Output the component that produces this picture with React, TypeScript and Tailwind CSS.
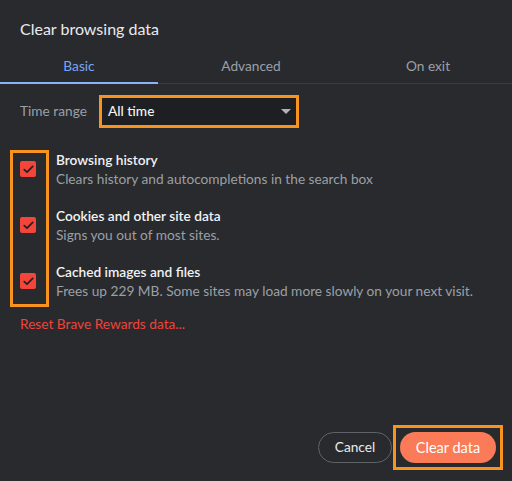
import { useState } from "react"

const items = [
  { title: "Browsing history", desc: "Clears history and autocompletions in the search box" },
  { title: "Cookies and other site data", desc: "Signs you out of most sites." },
  { title: "Cached images and files", desc: "Frees up 229 MB. Some sites may load more slowly on your next visit." },
]

function Check() {
  return (
    <div className="flex h-4 w-4 shrink-0 items-center justify-center rounded-[2px] bg-[#f4453a]">
      <svg width="11" height="9" viewBox="0 0 11 9" fill="none">
        <path d="M1.3 4.6 L4 7.2 L9.7 1.4" stroke="#202124" strokeWidth="1.8" strokeLinecap="round" strokeLinejoin="round" />
      </svg>
    </div>
  )
}

export default function App() {
  const [tab, setTab] = useState(0)
  const tabs = [
    { label: "Basic", w: "w-[158px]" },
    { label: "Advanced", w: "w-[186px]" },
    { label: "On exit", w: "flex-1" },
  ]

  return (
    <div className="flex h-[481px] w-[512px] flex-col bg-[#292a2e] font-['Lato','Liberation_Sans',sans-serif] text-[13.7px]">
      <h1 className="px-5 pt-[17px] text-[16px] leading-6 text-[#e8eaed]">Clear browsing data</h1>

      {/* Tabs */}
      <div className="flex border-b border-[#3c3d41]">
        {tabs.map((t, i) => (
          <button
            key={t.label}
            onClick={() => setTab(i)}
            className={`${t.w} relative h-[42px] pt-[7px] text-center leading-[24px] ${i === tab ? "text-[#7aa5f5]" : "text-[#9aa0a6]"}`}
          >
            <span className="block">{t.label}</span>
            {i === tab && <span className="absolute inset-x-0 -bottom-px h-[2px] bg-[#8ab4f8]" />}
          </button>
        ))}
      </div>

      {/* Time range */}
      <div className="mt-[11px] flex items-center pl-5">
        <span className="w-[79px] text-[#9aa0a6]">Time range</span>
        <div className="flex h-[33px] w-[200px] items-center justify-between border-[3px] border-[#f7931e] bg-[#1e1f22] pl-[6px] pr-[5px] text-[#f1f3f4]">
          <span className="font-medium">All time</span>
          <svg width="10" height="5" viewBox="0 0 10 5">
            <path d="M0 0 L10 0 L5 5 Z" fill="#b0b3b8" />
          </svg>
        </div>
      </div>

      {/* Checkboxes */}
      <div className="relative mt-[22px] flex flex-col gap-[18px] pl-5">
        <div className="absolute left-[10px] top-0 h-[157px] w-[39px] border-[3px] border-[#f7931e]" />
        {items.map((it) => (
          <div key={it.title} className="flex items-center gap-5">
            <Check />
            <div className="flex flex-col">
              <span className="font-semibold leading-[19px] text-[#f1f3f4]">{it.title}</span>
              <span className="leading-[19px] text-[#9aa0a6]">{it.desc}</span>
            </div>
          </div>
        ))}
      </div>

      <a className="mt-[12px] px-5 leading-6 text-[#f0433a]">Reset Brave Rewards data...</a>

      {/* Footer */}
      <div className="mt-auto flex items-center justify-end gap-px pb-[11px] pr-[9px]">
        <button className="h-[31px] w-[74px] rounded-full border border-[#5f6368] text-[#e8eaed]">Cancel</button>
        <div className="border-[3px] border-[#f7931e] p-[4px]">
          <button className="block h-[31px] w-[96px] rounded-full bg-[#fb7b58] text-[14.5px] text-white">Clear data</button>
        </div>
      </div>
    </div>
  )
}
